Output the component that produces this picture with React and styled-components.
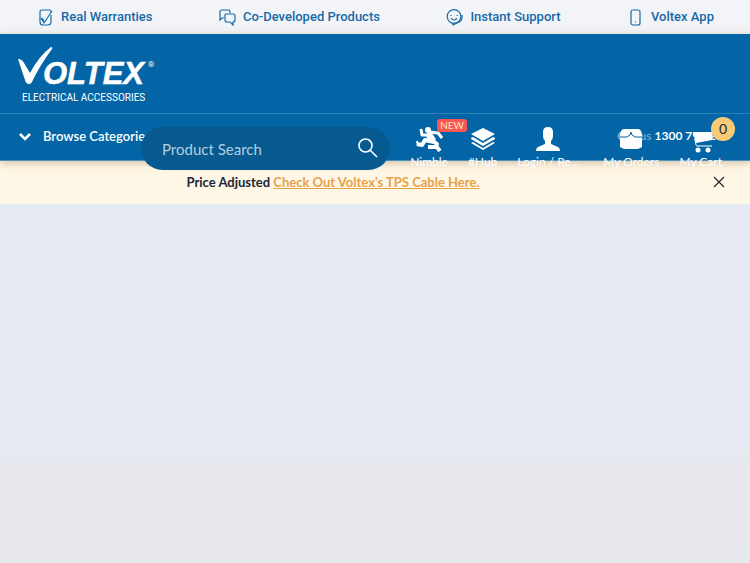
import React from "react";
import styled, { createGlobalStyle } from "styled-components";

const Global = createGlobalStyle`
  * { box-sizing: border-box; }
  body { margin: 0; min-height: 100vh; font-family: Lato, sans-serif; color: #202638;
    background: linear-gradient(#e6ebf3 204px, #e6eaf3 440px, #e8e8ee 470px, #e8e9ee); }
  button, input { font: inherit; }
`;
const Benefits = styled.ul`
  display: flex; justify-content: space-between; align-items: center;
  height: 34px; margin: 0; padding: 0 36px 0 37px; list-style: none; background: #f3f4f8;
`;
const Benefit = styled.li`
  display: flex; align-items: center; gap: 7px;
  font: 500 13px/20px Roboto, sans-serif; color: #1769a8;
  svg { width: 17px; height: 17px; fill: none; stroke: currentColor; stroke-width: 1.2; }
`;
const Header = styled.header`
  position: relative; background: #0365a5; color: #fff; box-shadow: 0 2px 8px #8d6a4066;
`;
const Brand = styled.a`
  display: block; height: 79px; padding: 12px 18px; color: #fff;
  svg { display: block; width: 138px; height: 58px; fill: currentColor; }
`;
const Nav = styled.nav`
  display: flex; justify-content: space-between; align-items: center;
  height: 48px; padding: 0 20px 3px 18px; border-top: 1px solid #2a80b8; border-bottom: 1px solid #4b91bd;
`;
const Browse = styled.button`
  display: flex; align-items: center; gap: 11px; padding: 0; border: 0; background: none;
  font-size: 13px; font-weight: 600; color: #fff;
  svg { width: 14px; height: 14px; fill: none; stroke: currentColor; stroke-width: 2.5; }
`;
const Phone = styled.a`
  font-size: 12px; color: #8bb9d8; text-decoration: none;
  strong { color: #fff; }
`;
const Overlay = styled.div`
  position: absolute; top: 83px; left: 141px; right: 28px;
  display: flex; justify-content: space-between; align-items: flex-start; gap: 20px;
`;
const Search = styled.form`
  display: flex; align-items: center; flex: 1; min-width: 0; height: 43px; margin-top: 10px;
  padding: 0 11px 2px 21px; border-radius: 22px; background: #075a90;
`;
const SearchInput = styled.input`
  flex: 1; min-width: 0; padding: 2px 0 0; border: 0; outline: 0; background: none;
  font-size: 15px; color: #fff;
  &::placeholder { color: #b6cddd; opacity: 1; }
`;
const SearchButton = styled.button`
  display: flex; padding: 0; border: 0; background: none; color: #fff;
  svg { width: 22px; height: 22px; fill: none; stroke: currentColor; stroke-width: 1.6; }
`;
const Actions = styled.div`
  display: flex; gap: 20px; padding-top: 8px;
`;
const Action = styled.a`
  position: relative; display: flex; flex-direction: column; align-items: center;
  margin-left: ${({ $spaced }) => ($spaced ? 4 : 0)}px;
  font-size: 12px; line-height: 18px; color: #fff; white-space: nowrap; text-decoration: none;
  svg { width: 28px; height: 28px; fill: currentColor; }
`;
const NewBadge = styled.span`
  position: absolute; top: -6px; right: -19px; padding: 0 3px; border-radius: 3px;
  background: #f95656; color: #ffe9b5; font-size: 10px; line-height: 13px;
`;
const CountBadge = styled.span`
  position: absolute; top: -8px; right: -13px; width: 24px; height: 24px; border-radius: 50%;
  background: #f9cb78; color: #202638; font-size: 14px; line-height: 24px; text-align: center;
`;
const Notice = styled.aside`
  display: flex; align-items: flex-start; height: 43px; padding: 11px 25px 0; background: #fff7e5;
  font-size: 13px; line-height: 20px; font-weight: 700;
`;
const NoticeText = styled.p`
  flex: 1; margin: 0; padding-right: 72px; text-align: center;
  a { color: #e6a14c; }
`;
const Close = styled.button`
  display: flex; padding: 4px 0; border: 0; background: none; color: #202638;
  svg { width: 12px; height: 12px; fill: none; stroke: currentColor; stroke-width: 1.2; }
`;

const benefits = [
  ["Real Warranties", <><path d="M14 6v7q0 3-3 3H6q-3 0-3-3V3q0-2 2-2h8q1 0 1 2" /><path d="m4 9 3 5 8-12M5 9l2 3" /></>],
  ["Co-Developed Products", <><path d="M5 9H3L1 11V3q0-2 2-2h7q1 0 1 3" /><path d="M7 5h7q2 0 2 2v4q0 2-2 2v3l-3-3H8q-2 0-2-2V6q0-1 1-1Z" /></>],
  ["Instant Support", <><circle cx="8" cy="7.5" r="6.8" /><path d="M5 9q3 4 6 0M5 6v1m6-1v1m5-1q1 6-5 8l-4 2v-2" /></>],
  ["Voltex App", <><rect x="4" y="1" width="9" height="15" rx="2" /><path d="M8 13h1" /></>],
];

function Logo() {
  return (
    <svg viewBox="0 0 138 58" role="img" aria-label="Voltex Electrical Accessories">
      <path d="M0 13q4 0 6 4l6 10Q21 10 33 1q2 0 1 2Q22 19 14 36q-1 2-3 2-3 0-4-4Z" />
      <text x="25" y="38" fontFamily="Liberation Sans, sans-serif" fontSize="31" fontWeight="700" fontStyle="italic" stroke="currentColor" strokeWidth="0.5">OLTEX</text>
      <text x="130" y="21" fontFamily="Roboto, sans-serif" fontSize="8">®</text>
      <text x="4" y="55" fontFamily="Roboto, sans-serif" fontSize="10">ELECTRICAL ACCESSORIES</text>
    </svg>
  );
}

export default function App() {
  return (
    <>
      <Global />
      <Benefits>
        {benefits.map(([label, icon]) => (
          <Benefit key={label}><svg viewBox="0 0 17 17" aria-hidden="true">{icon}</svg>{label}</Benefit>
        ))}
      </Benefits>
      <Header>
        <Brand href="#home"><Logo /></Brand>
        <Nav>
          <Browse><svg viewBox="0 0 14 14" aria-hidden="true"><path d="m2 5 5 5 5-5" /></svg>Browse Categories</Browse>
          <Phone href="tel:1300798200">Call us <strong>1300 798 200</strong></Phone>
        </Nav>
        <Overlay>
          <Search role="search">
            <SearchInput type="search" aria-label="Product Search" placeholder="Product Search" />
            <SearchButton type="button" aria-label="Search"><svg viewBox="0 0 22 22"><circle cx="8.5" cy="8.5" r="6.5" /><path d="m13 13 7 7" /></svg></SearchButton>
          </Search>
          <Actions>
            <Action href="#nimble">
              <svg viewBox="0 0 28 28" aria-hidden="true">
                <circle cx="13" cy="5" r="3" />
                <g fill="none" stroke="currentColor" strokeLinejoin="round">
                  <path strokeWidth="7" d="m13 8 5 8" />
                  <path strokeWidth="3" d="M13 10H7L6 4M15 7l8 1 4 5" />
                  <path strokeWidth="4" d="m19 17-9-2-3 5-5-1" />
                  <path strokeWidth="4" d="m17 15 5 4-1 3h-8m8-1 4 5" />
                  <path strokeWidth="2" d="m2 16 1 5" />
                </g>
              </svg>
              Nimble<NewBadge>NEW</NewBadge>
            </Action>
            <Action href="#hub">
              <svg viewBox="0 0 28 28" aria-hidden="true"><path d="m14 3 12 6-12 7L2 9ZM2 13l2-1 10 6 10-6 2 1v1l-12 7-12-7ZM2 18l2-1 10 6 10-6 2 1-12 7Z" /></svg>#Hub
            </Action>
            <Action href="#login">
              <svg viewBox="0 0 28 28" aria-hidden="true"><path d="M9 7q0-5 5-5t5 5v4q0 3-2 5v3l7 3q2 1 2 4H2q0-3 2-4l7-3v-3q-2-2-2-5Z" /></svg>Login / Re...
            </Action>
            <Action href="#orders" $spaced>
              <svg viewBox="0 0 28 28" aria-hidden="true">
                <path d="M7 4h14q2 0 3 2l2 6-1 1v9l-4 2H7l-4-2v-9l-1-1 2-6q1-2 3-2Z" />
                <path d="M2 12h8l3-2 1-3 1 3 3 2h8" fill="none" stroke="#0365a5" />
              </svg>
              My Orders
            </Action>
            <Action href="#cart">
              <svg viewBox="0 0 28 28" aria-hidden="true">
                <path d="M6 7h20l-1 8-16 3Z" />
                <path d="m8 15 1 5q0 1 2 1h14" fill="none" stroke="currentColor" />
                <circle cx="11" cy="25" r="2.5" /><circle cx="21" cy="25" r="2.5" />
              </svg>
              My Cart<CountBadge>0</CountBadge>
            </Action>
          </Actions>
        </Overlay>
      </Header>
      <Notice>
        <NoticeText>Price Adjusted <a href="#cable">Check Out Voltex's TPS Cable Here.</a></NoticeText>
        <Close aria-label="Close"><svg viewBox="0 0 12 12"><path d="m1 1 10 10M11 1 1 11" /></svg></Close>
      </Notice>
    </>
  );
}
